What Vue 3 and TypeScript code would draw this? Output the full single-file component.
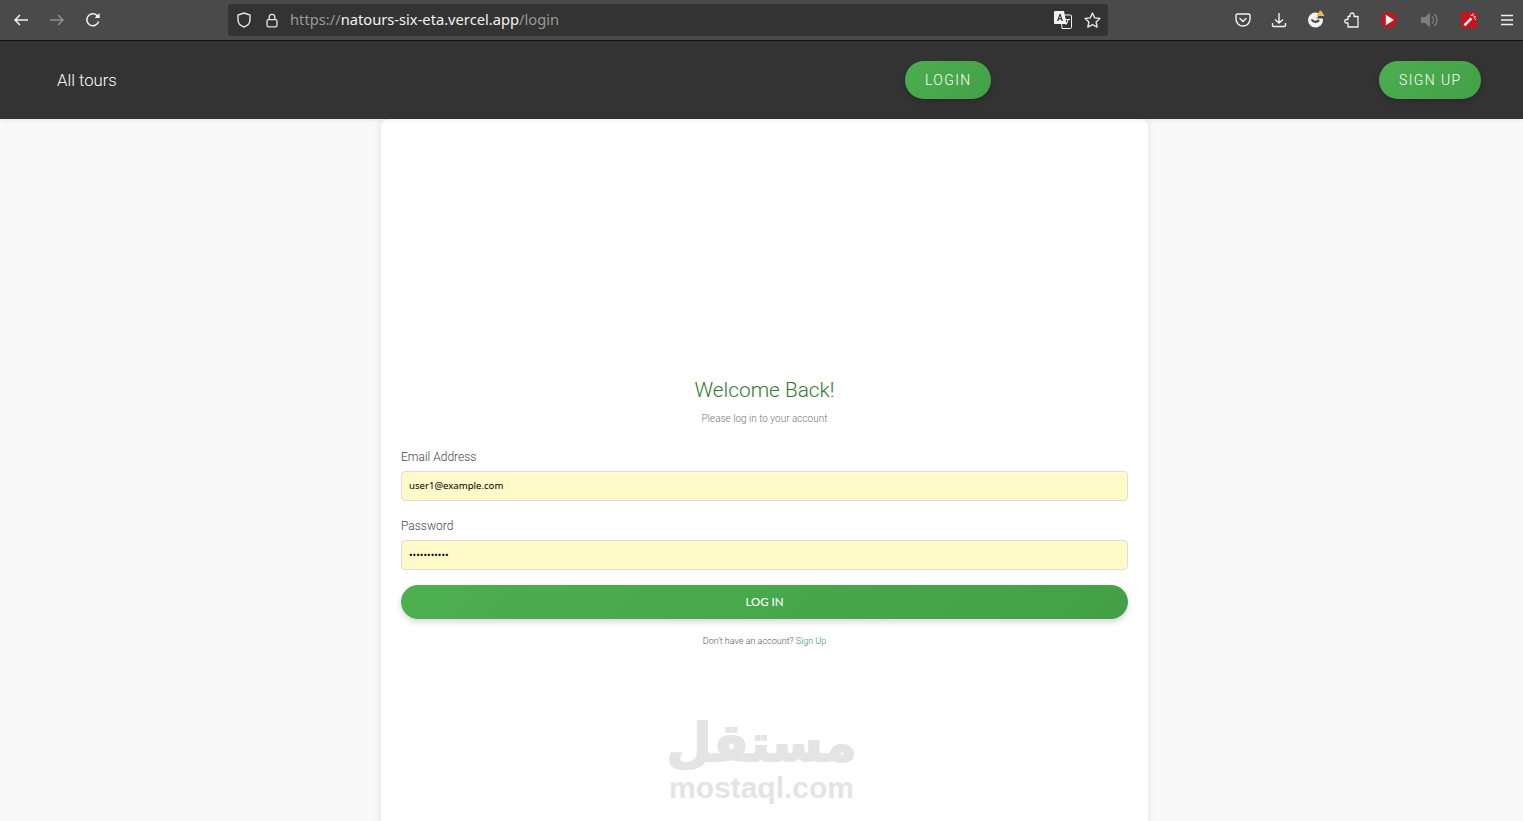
<script setup lang="ts">
import { ref } from 'vue';

const email = ref('user1@example.com');
const password = ref('•••••••••••');
</script>

<template>
  <div class="page">
    <header class="browser-bar">
      <div class="nav-icons">
        <svg class="icon" viewBox="0 0 16 16" fill="none" stroke="#f2f2f2" stroke-width="1.5">
          <path d="M15 8H2M7 3 2 8l5 5" />
        </svg>
        <svg class="icon" viewBox="0 0 16 16" fill="none" stroke="#8f8f8f" stroke-width="1.5">
          <path d="M1 8h13M9 3l5 5-5 5" />
        </svg>
        <svg class="icon" viewBox="0 0 16 16" fill="none" stroke="#f2f2f2" stroke-width="1.5">
          <path d="M13.6 9.500A6 6 0 1 1 12 3.400L14 5.400" />
          <path d="M14.600 1v5h-5" fill="#f2f2f2" stroke="none" />
        </svg>
      </div>

      <div class="url-bar">
        <svg class="icon shield" viewBox="0 0 16 16" fill="none" stroke="#e6e6e6" stroke-width="1.400">
          <path d="M8 1 2 3v4.500C2 11.500 5 14 8 15c3-1 6-3.500 6-7.500V3Z" />
        </svg>
        <svg class="icon lock" viewBox="0 0 16 16" fill="none" stroke="#e6e6e6" stroke-width="1.400">
          <path d="M5 7V4.500a3 3 0 0 1 6 0V7" />
          <rect x="2.700" y="7" width="10.600" height="7.800" rx="1.500" />
        </svg>
        <span class="url"><span class="dim">https://</span>natours-six-eta.vercel.app<span class="dim">/login</span></span>
        <svg class="icon translate" viewBox="0 0 18 18">
          <path d="M7 4h9.500a1 1 0 0 1 1 1v11.500a1 1 0 0 1-1 1H8Z" fill="#333" stroke="#f2f2f2" stroke-width="1" />
          <path d="M1 0h9l2.500 13H1a1 1 0 0 1-1-1V1a1 1 0 0 1 1-1Z" fill="#f2f2f2" />
          <path d="m3 10 2.500-7h1.200L9 10H7.700l-.5-1.600H4.900L4.400 10Zm2.200-2.700h1.700l-.8-2.600Z" fill="#333" />
          <path d="M11 8h5v1h-1.500c-.3 2-1 3.500-2.500 5l-.8-.7c1.200-1.200 1.900-2.500 2.100-4.300H11Z" fill="#f2f2f2" />
        </svg>
        <svg class="icon star" viewBox="0 0 16 16" fill="none" stroke="#e6e6e6" stroke-width="1.300" stroke-linejoin="round">
          <path d="m8 1 2.100 4.500 4.900.6-3.600 3.300 1 4.800L8 11.800l-4.400 2.400 1-4.800L1 6.100l4.900-.6Z" />
        </svg>
      </div>

      <div class="tool-icons">
        <svg class="icon pocket" viewBox="0 0 16 16" fill="none" stroke="#f2f2f2" stroke-width="1.400">
          <path d="M2.500 2h11A1.500 1.500 0 0 1 15 3.500V7A7 7 0 0 1 1 7V3.500A1.500 1.500 0 0 1 2.500 2Z" />
          <path d="m5 6.500 3 3 3-3" stroke-linecap="round" />
        </svg>
        <svg class="icon download" viewBox="0 0 16 16" fill="none" stroke="#f2f2f2" stroke-width="1.400">
          <path d="M8 1v10M4 7.500 8 11l4-3.500M1.500 11v2.500a1 1 0 0 0 1 1h11a1 1 0 0 0 1-1V11" />
        </svg>
        <svg class="icon sync" viewBox="0 0 18 18">
          <circle cx="8.500" cy="10" r="7.500" fill="#f2f2f2" />
          <path d="M4.500 9.500c2 3 5.500 3 7.500.5" fill="none" stroke="#4a4a4a" stroke-width="2.200" />
          <path d="M8.500 7.500h2.500V1h7v7.500h-7Z" fill="#4a4a4a" />
          <path d="M13.500.5c.6 0 1 .5 1.300 1L17.500 6h-8l2.700-4.500c.3-.5.700-1 1.300-1Z" fill="#e8b75a" />
        </svg>
        <svg class="icon puzzle" viewBox="0 0 16 16" fill="none" stroke="#f2f2f2" stroke-width="1.300" stroke-linejoin="round">
          <path d="M7 4.500V3a2 2 0 0 1 4 0v1.500h4V15H5v-4H3.500a1.750 1.750 0 0 1 0-3.500H5v-3Z" />
        </svg>
        <svg class="icon play" viewBox="0 0 16 16">
          <circle cx="8" cy="8" r="8" fill="#c4161c" />
          <path d="M4.800 2.800v10.400L13 8Z" fill="#f7f7f7" />
        </svg>
        <svg class="icon speaker" viewBox="0 0 18 16" fill="#7d7d7d">
          <path d="M0 5h4l5-4.500v15L4 11H0Z" />
          <path d="M11 4.500a5 5 0 0 1 0 7M13.500 2a8.500 8.500 0 0 1 0 12" fill="none" stroke="#7d7d7d" stroke-width="1.500" />
        </svg>
        <svg class="icon wand" viewBox="0 0 16 16">
          <rect width="16" height="16" fill="#c8141b" />
          <path d="m2.500 12.500 7-7 1.800 1.800-7 7Z" fill="#f7f7f7" />
          <path d="M12 1.500v2.500M15 5h-2.500M9.500 2.500l1.500 1.500M15 8l-1.500-1.500" stroke="#f7f7f7" stroke-width="1" />
        </svg>
        <svg class="icon menu" viewBox="0 0 16 16" fill="none" stroke="#f2f2f2" stroke-width="1.400">
          <path d="M2 3.500h12M2 8h12M2 12.500h12" />
        </svg>
      </div>
    </header>

    <nav class="site-nav">
      <a class="all-tours">All tours</a>
      <button class="pill login-pill">LOGIN</button>
      <button class="pill signup-pill">SIGN UP</button>
    </nav>

    <main class="content">
      <section class="card">
        <div class="form-wrap">
          <h1 class="title">Welcome Back!</h1>
          <p class="subtitle">Please log in to your account</p>

          <div class="field">
            <label class="label">Email Address</label>
            <div class="input">{{ email }}</div>
          </div>
          <div class="field">
            <label class="label">Password</label>
            <div class="input">{{ password }}</div>
          </div>

          <button class="submit">LOG IN</button>
          <p class="signup-line">Don't have an account? <a class="signup-link">Sign Up</a></p>
        </div>

        <div class="watermark">
          <span class="wm-arabic" lang="ar" dir="rtl">مستقل</span>
          <span class="wm-latin">mostaql.com</span>
        </div>
      </section>
    </main>
  </div>
</template>

<style>
html,
body {
  margin: 0;
  overflow: hidden;
}
</style>

<style scoped>
.page {
  height: 100vh;
  display: flex;
  flex-direction: column;
  overflow: hidden;
  background: #f9f9f9;
  font-family: Roboto, "Liberation Sans", sans-serif;
}

.browser-bar {
  flex: 0 0 41px;
  box-sizing: border-box;
  display: flex;
  align-items: center;
  background: #4a4a4a;
  border-bottom: 1px solid #111;
}

.icon {
  width: 16px;
  height: 16px;
  flex-shrink: 0;
  display: block;
}

.nav-icons {
  display: flex;
  gap: 20px;
  padding-left: 13px;
  width: 228px;
  box-sizing: border-box;
}

.url-bar {
  width: 880px;
  height: 32px;
  display: flex;
  align-items: center;
  background: #333333;
  border-radius: 4px;
  padding: 0 7px 0 8px;
  box-sizing: border-box;
}

.shield {
  margin-right: 12px;
}

.lock {
  margin-right: 10px;
  height: 15px;
}

.url {
  flex: 1;
  font-family: "Noto Sans", sans-serif;
  font-size: 14.700px;
  line-height: 30px;
  padding-bottom: 2px;
  color: #f2f2f2;
  white-space: nowrap;
}

.dim {
  color: #9a9a9a;
}

.translate {
  width: 18px;
  height: 18px;
  margin-right: 12px;
}

.star {
  width: 17px;
  height: 17px;
}

.tool-icons {
  display: flex;
  align-items: center;
  gap: 20px;
  margin-left: 127px;
}

.sync {
  width: 18px;
  height: 18px;
  margin-top: -2px;
  margin-right: -2px;
}

.play {
  margin-left: 2px;
}

.speaker {
  width: 18px;
  margin-left: 4px;
  margin-right: 1px;
}

.wand {
  margin-left: 1px;
}

.menu {
  margin-left: 2px;
}

.site-nav {
  flex: 0 0 78px;
  box-sizing: border-box;
  display: flex;
  align-items: center;
  padding: 0 42px 0 57px;
  background: #333333;
  box-shadow: 0 2px 4px rgba(0, 0, 0, 0.06);
  z-index: 1;
}

.all-tours {
  font-size: 16.700px;
  font-weight: 300;
  color: #ffffff;
}

.pill {
  height: 38px;
  border: none;
  border-radius: 19px;
  padding: 0 20px;
  background: linear-gradient(135deg, #4caf50, #43a047);
  color: #ffffff;
  font-family: Roboto, sans-serif;
  font-size: 14px;
  font-weight: 300;
  letter-spacing: 1.400px;
  white-space: nowrap;
  box-shadow: 0 3px 6px rgba(0, 0, 0, 0.16);
}

.login-pill {
  width: 86px;
  margin-left: auto;
}

.signup-pill {
  width: 102px;
  margin-left: 388px;
}

.content {
  flex: 1;
  display: flex;
  justify-content: center;
  min-height: 0;
  padding-left: 6px;
}

.card {
  width: 767px;
  height: 760px;
  flex-shrink: 0;
  box-sizing: border-box;
  padding: 0 20px;
  background: #ffffff;
  border-radius: 8px;
  box-shadow: 0 0 8px rgba(0, 0, 0, 0.1);
}

.form-wrap {
  padding-top: 257px;
}

.title {
  margin: 0;
  text-align: center;
  font-size: 20.800px;
  line-height: 28px;
  font-weight: 300;
  color: #2e7d32;
}

.subtitle {
  margin: 8px 0 0;
  text-align: center;
  font-size: 10px;
  line-height: 14px;
  font-weight: 300;
  color: #757575;
}

.field {
  margin-top: 17px;
}

.subtitle + .field {
  margin-top: 23px;
}

.label {
  display: block;
  font-size: 12px;
  line-height: 16px;
  margin-bottom: 6px;
  font-weight: 300;
  color: #444444;
}

.input {
  height: 30px;
  box-sizing: border-box;
  display: flex;
  align-items: center;
  padding: 0 8px 1px 7px;
  border: 1px solid #dddddd;
  border-radius: 4px;
  background: #fffac8;
  font-family: "Noto Sans", sans-serif;
  font-size: 9.600px;
  line-height: 12px;
  color: #000000;
}

.submit {
  display: block;
  width: 100%;
  height: 34px;
  margin-top: 15px;
  padding: 0 0 2px;
  border: none;
  border-radius: 17px;
  background: linear-gradient(135deg, #4caf50, #43a047);
  color: #ffffff;
  font-family: Lato, sans-serif;
  font-size: 11.500px;
  font-weight: 500;
  box-shadow: 0 3px 6px rgba(0, 0, 0, 0.16);
}

.signup-line {
  margin: 15px 0 0;
  text-align: center;
  font-size: 9px;
  line-height: 14px;
  font-weight: 300;
  color: #555555;
}

.signup-link {
  color: #2e8b6f;
}

.watermark {
  margin-top: 66px;
  margin-right: 6px;
  display: flex;
  flex-direction: column;
  align-items: center;
  color: #e4e4e4;
  font-family: "DejaVu Sans", sans-serif;
  font-weight: 700;
}

.wm-arabic {
  font-size: 52px;
  line-height: 58px;
  -webkit-text-stroke: 2px #e4e4e4;
}

.wm-latin {
  font-family: "Liberation Sans", sans-serif;
  font-size: 30px;
  line-height: 32px;
}
</style>
